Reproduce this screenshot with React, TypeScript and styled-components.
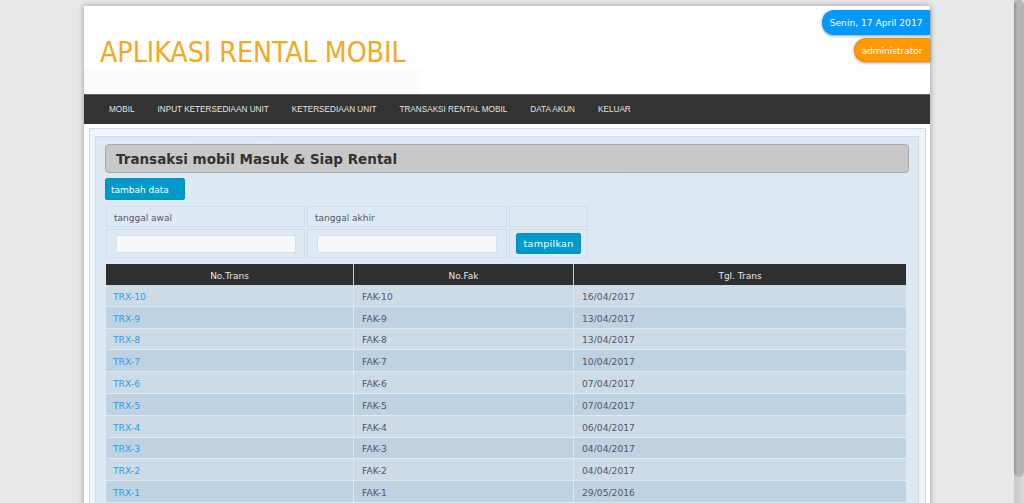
import React from 'react';
import styled, { createGlobalStyle } from 'styled-components';

const GlobalStyle = createGlobalStyle`
  body {
    margin: 0;
    padding-right: 10px;
    background: #e8e8e8;
    font-family: "DejaVu Sans", Verdana, sans-serif;
    font-size: 9px;
    color: #445;
  }
`;

const ScrollTrack = styled.div`
  position: fixed;
  top: 0;
  right: 0;
  bottom: 0;
  width: 10px;
  background: linear-gradient(to right, #c8c8c8, #dcdcdc);
`;

const ScrollThumb = styled.div`
  height: 477px;
  border-radius: 5px;
  background: linear-gradient(to right, #8e8e8e, #b4b4b4 30%, #b4b4b4);
`;

const Wrapper = styled.div`
  width: 846px;
  margin: 6px auto 0;
  background: #fff;
  box-shadow: 0 0 6px rgba(0, 0, 0, 0.35);
  padding-bottom: 20px;
`;

const Header = styled.header`
  height: 88px;
  display: flex;
  justify-content: space-between;
  background: linear-gradient(to bottom, #fff 72%, #fbfbfb 72%, #fbfbfb 100%) no-repeat left top / 336px 100%;
`;

const SiteTitle = styled.h1`
  margin: 31px 0 0 16px;
  font-family: "DejaVu Sans Condensed", "DejaVu Sans", sans-serif;
  font-stretch: condensed;
  font-size: 28.2px;
  line-height: 32px;
  font-weight: 400;
  color: #f5a623;
`;

const Badges = styled.div`
  display: flex;
  flex-direction: column;
  align-items: flex-end;
  gap: 3px;
  padding-top: 4px;
`;

const Badge = styled.div<{ $bg: string; $border: string; $size: number }>`
  box-sizing: border-box;
  height: 24.5px;
  line-height: 24px;
  padding: 0 7.5px 0 7px;
  color: #fff;
  font-size: ${({ $size }) => $size}px;
  background: ${({ $bg }) => $bg};
  border: 1px solid ${({ $border }) => $border};
  border-right: none;
  border-radius: 12px 0 0 12px;
  box-shadow: 0 1px 3px rgba(0, 0, 0, 0.4);
`;

const Nav = styled.nav`
  height: 29px;
  display: flex;
  align-items: center;
  gap: 23px;
  padding-left: 25px;
  background: #333;
  border-top: 1px solid #666;
`;

const NavLink = styled.a`
  font-family: "Liberation Sans", Arial, sans-serif;
  font-size: 8.2px;
  color: #e4e4e4;
  text-transform: uppercase;
`;

const OuterPanel = styled.main`
  margin: 4px 4px 0 5px;
  padding: 7px 6px 0 5px;
  background: #eef4f9;
  border: 1px solid #cfdde9;
`;

const InnerPanel = styled.section`
  padding: 7px 9px 0;
  background: linear-gradient(135deg, #dde9f3, #dce8f2);
  border: 1px solid #cfdde9;
`;

const PageTitle = styled.h2`
  margin: 0;
  height: 29px;
  line-height: 29px;
  padding-left: 10px;
  box-sizing: border-box;
  background: #c8c8c8;
  border: 1px solid #aaa;
  border-radius: 4px;
  font-size: 13.5px;
  font-weight: 700;
  color: #333;
`;

const Button = styled.button`
  display: block;
  border: 1px solid #0a8fc4;
  border-radius: 2px;
  background: #0099cc;
  color: #fff;
  font-family: "DejaVu Sans", Verdana, sans-serif;
`;

const AddButton = styled(Button)`
  width: 80px;
  height: 22px;
  margin-top: 5px;
  padding: 2px 5px 0;
  font-size: 9px;
  text-align: left;
`;

const ShowButton = styled(Button)`
  width: 65px;
  height: 21px;
  padding: 0;
  font-size: 9.5px;
  letter-spacing: 0.3px;
`;

const FilterTable = styled.table`
  margin: 4px 0 0 -1px;
  border-collapse: separate;
  border-spacing: 2px;
`;

const FilterCell = styled.td<{ $width: number; $height: number }>`
  box-sizing: border-box;
  width: ${({ $width }) => $width}px;
  height: ${({ $height }) => $height}px;
  padding: 2px 7px 0;
  border: 1px solid #cfdeea;
  color: #556;
`;

const InputCell = styled(FilterCell)`
  padding: 0 8px 0 9px;
`;

const ButtonCell = styled(FilterCell)`
  padding: 0 6px;
`;

const DateInput = styled.input`
  display: block;
  box-sizing: border-box;
  width: 180px;
  height: 18px;
  border: 1px solid #d3e0eb;
  border-radius: 2px;
  background: #f8f8f8;
`;

const DataTable = styled.table`
  width: 800px;
  margin: 4px 0 0 1px;
  border-collapse: separate;
  border-spacing: 0;
  table-layout: fixed;
`;

const HeadCell = styled.th<{ $width: number }>`
  box-sizing: border-box;
  width: ${({ $width }) => $width}px;
  height: 21px;
  padding: 2px 0 0;
  background: #2f2f2f;
  color: #e8e8e8;
  font-weight: 400;
  border-right: 1px solid #ccc;
  &:last-child {
    border-right: none;
  }
`;

const Row = styled.tr`
  &:nth-child(odd) td {
    background: #cddbe6;
  }
  &:nth-child(even) td {
    background: #bfd2e2;
  }
`;

const Cell = styled.td`
  height: 21.8px;
  padding: 2px 8px 0;
  box-sizing: border-box;
  font-size: 9.2px;
  border-right: 1px solid #dce8f2;
  border-bottom: 1px solid #dce8f2;
  color: #556;
  &:first-child {
    padding-left: 7px;
  }
  &:last-child {
    border-right: none;
  }
`;

const TransLink = styled.a`
  color: #1f9ff2;
`;

const navItems = ['Mobil', 'Input Ketersediaan Unit', 'Ketersediaan Unit', 'Transaksi Rental Mobil', 'Data Akun', 'Keluar'];

const rows = [
  ['TRX-10', 'FAK-10', '16/04/2017'],
  ['TRX-9', 'FAK-9', '13/04/2017'],
  ['TRX-8', 'FAK-8', '13/04/2017'],
  ['TRX-7', 'FAK-7', '10/04/2017'],
  ['TRX-6', 'FAK-6', '07/04/2017'],
  ['TRX-5', 'FAK-5', '07/04/2017'],
  ['TRX-4', 'FAK-4', '06/04/2017'],
  ['TRX-3', 'FAK-3', '04/04/2017'],
  ['TRX-2', 'FAK-2', '04/04/2017'],
  ['TRX-1', 'FAK-1', '29/05/2016'],
];

export default function App() {
  return (
    <>
      <GlobalStyle />
      <ScrollTrack aria-hidden="true">
        <ScrollThumb />
      </ScrollTrack>
      <Wrapper>
        <Header>
          <SiteTitle>APLIKASI RENTAL MOBIL</SiteTitle>
          <Badges>
            <Badge $bg="#0099ff" $border="#0099ff" $size={9.15}>Senin, 17 April 2017</Badge>
            <Badge $bg="#ff9900" $border="#f58a00" $size={9}>administrator</Badge>
          </Badges>
        </Header>
        <Nav>
          {navItems.map((item) => (
            <NavLink key={item}>{item}</NavLink>
          ))}
        </Nav>
        <OuterPanel>
          <InnerPanel>
            <PageTitle>Transaksi mobil Masuk &amp; Siap Rental</PageTitle>
            <AddButton>tambah data</AddButton>
            <FilterTable>
              <tbody>
                <tr>
                  <FilterCell $width={199} $height={21}>tanggal awal</FilterCell>
                  <FilterCell $width={200} $height={21}>tanggal akhir</FilterCell>
                  <FilterCell $width={79} $height={21} />
                </tr>
                <tr>
                  <InputCell $width={199} $height={29}><DateInput /></InputCell>
                  <InputCell $width={200} $height={29}><DateInput /></InputCell>
                  <ButtonCell $width={79} $height={29}><ShowButton>tampilkan</ShowButton></ButtonCell>
                </tr>
              </tbody>
            </FilterTable>
            <DataTable>
              <thead>
                <tr>
                  <HeadCell $width={248}>No.Trans</HeadCell>
                  <HeadCell $width={220}>No.Fak</HeadCell>
                  <HeadCell $width={332}>Tgl. Trans</HeadCell>
                </tr>
              </thead>
              <tbody>
                {rows.map(([trans, fak, date]) => (
                  <Row key={trans}>
                    <Cell><TransLink>{trans}</TransLink></Cell>
                    <Cell>{fak}</Cell>
                    <Cell>{date}</Cell>
                  </Row>
                ))}
              </tbody>
            </DataTable>
          </InnerPanel>
        </OuterPanel>
      </Wrapper>
    </>
  );
}
